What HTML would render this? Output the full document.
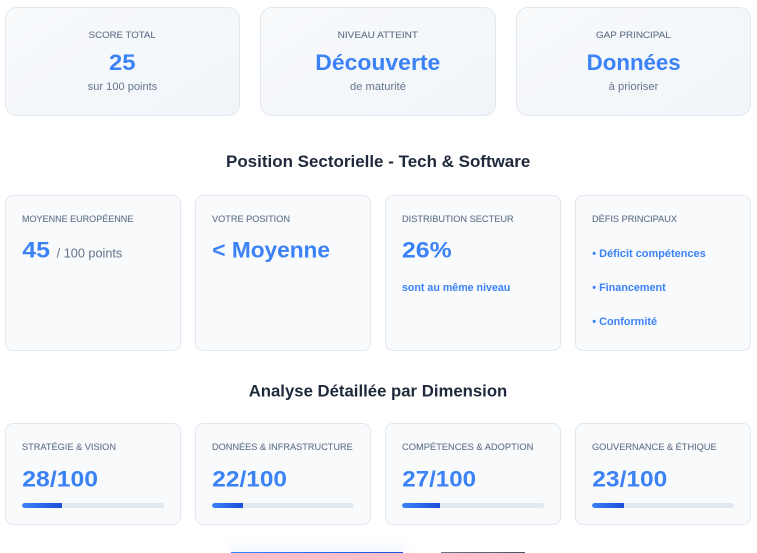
<!DOCTYPE html>
<html lang="fr">
<head>
<meta charset="utf-8">
<title>Résultats</title>
<style>
html,body{margin:0;padding:0;background:#fff;width:757px;height:553px;overflow:hidden}
body{position:relative;font-family:"Liberation Sans",sans-serif}
#w{position:absolute;left:0;top:0;width:757px;height:553px;overflow:hidden}
.c{position:absolute;box-sizing:border-box;border:1px solid #e2e8f0}
.t{width:235px;height:109px;top:7px;border-radius:12px;background:linear-gradient(145deg,#f8fafc,#f1f5f9)}
.m{width:176px;height:156px;top:195px;border-radius:8px;background:#f8fafc}
.b{width:176px;height:102px;top:423px;border-radius:8px;background:#f8fafc}
.x1{left:5px}.x2{left:195px}.x3{left:385px}.x4{left:575px}
.tr{position:absolute;top:503px;width:142px;height:5px;border-radius:3px;background:#e2e8f0;overflow:hidden}
.tr i{display:block;height:5px;background:linear-gradient(90deg,#3b82f6,#1d4ed8);border-radius:3px 0 0 3px}
.btn{position:absolute;top:552px;height:1px}
svg{position:absolute;left:0;top:0}
text{font-family:"Liberation Sans",sans-serif}
.l{font-size:9.4px;fill:#64748b;stroke:#64748b;stroke-width:.12px}
.v{font-size:22px;font-weight:bold;fill:#3b82f6}
.s{font-size:11px;fill:#64748b}
.h{font-size:17px;font-weight:bold;fill:#1e293b}
.d{font-size:11px;font-weight:bold;fill:#3b82f6}
</style>
</head>
<body>
<div id="w">
<div class="c t" style="left:5px"></div>
<div class="c t" style="left:260px;width:236px"></div>
<div class="c t" style="left:516px"></div>

<div class="c m x1"></div><div class="c m x2"></div><div class="c m x3"></div><div class="c m x4"></div>

<div class="c b x1"></div><div class="c b x2"></div><div class="c b x3"></div><div class="c b x4"></div>

<div class="tr" style="left:22px"><i style="width:40px"></i></div>
<div class="tr" style="left:212px"><i style="width:31px"></i></div>
<div class="tr" style="left:402px"><i style="width:38px"></i></div>
<div class="tr" style="left:592px"><i style="width:32px"></i></div>

<div class="btn" style="left:231px;width:172px;background:linear-gradient(90deg,#3b82f6,#1d4ed8);box-shadow:0 0 14px 2px rgba(59,130,246,.2)"></div>
<div class="btn" style="left:441px;width:84px;background:linear-gradient(90deg,#64748b,#475569)"></div>

<svg width="757" height="553" viewBox="0 0 757 553">
<text class="l" x="88.7" y="38" textLength="67" lengthAdjust="spacingAndGlyphs">SCORE TOTAL</text>
<text class="v" x="109" y="70" textLength="26.5" lengthAdjust="spacingAndGlyphs">25</text>
<text class="s" x="87.7" y="90" textLength="69.6" lengthAdjust="spacingAndGlyphs">sur 100 points</text>

<text class="l" x="337.7" y="38" textLength="80.3" lengthAdjust="spacingAndGlyphs">NIVEAU ATTEINT</text>
<text class="v" x="315.3" y="70" textLength="125" lengthAdjust="spacingAndGlyphs">Découverte</text>
<text class="s" x="350" y="90" textLength="56" lengthAdjust="spacingAndGlyphs">de maturité</text>

<text class="l" x="596" y="38" textLength="74.7" lengthAdjust="spacingAndGlyphs">GAP PRINCIPAL</text>
<text class="v" x="586.7" y="70" textLength="94" lengthAdjust="spacingAndGlyphs">Données</text>
<text class="s" x="608.7" y="90" textLength="49.6" lengthAdjust="spacingAndGlyphs">à prioriser</text>

<text class="h" x="226" y="167" textLength="304.3" lengthAdjust="spacingAndGlyphs">Position Sectorielle - Tech &amp; Software</text>

<text class="l" x="22" y="222" textLength="111.3" lengthAdjust="spacingAndGlyphs">MOYENNE EUROPÉENNE</text>
<text class="v" x="22.3" y="257.3" textLength="27.7" lengthAdjust="spacingAndGlyphs">45</text>
<text x="56.7" y="257.3" font-size="12.5" fill="#64748b" textLength="65.6" lengthAdjust="spacingAndGlyphs">/ 100 points</text>

<text class="l" x="212" y="222" textLength="78" lengthAdjust="spacingAndGlyphs">VOTRE POSITION</text>
<text class="v" x="212.3" y="257.3" textLength="117.7" lengthAdjust="spacingAndGlyphs">&lt; Moyenne</text>

<text class="l" x="402" y="222" textLength="111.7" lengthAdjust="spacingAndGlyphs">DISTRIBUTION SECTEUR</text>
<text class="v" x="402" y="257.3" textLength="49.7" lengthAdjust="spacingAndGlyphs">26%</text>
<text class="d" x="402" y="291" textLength="108.3" lengthAdjust="spacingAndGlyphs">sont au même niveau</text>

<text class="l" x="592" y="222" textLength="85" lengthAdjust="spacingAndGlyphs">DÉFIS PRINCIPAUX</text>
<text class="d" x="592.3" y="257" textLength="113.4" lengthAdjust="spacingAndGlyphs">• Déficit compétences</text>
<text class="d" x="592.3" y="291" textLength="73.4" lengthAdjust="spacingAndGlyphs">• Financement</text>
<text class="d" x="592.3" y="325" textLength="64.7" lengthAdjust="spacingAndGlyphs">• Conformité</text>

<text class="h" x="248.7" y="396.3" textLength="258.6" lengthAdjust="spacingAndGlyphs">Analyse Détaillée par Dimension</text>

<text class="l" x="22" y="450" textLength="94" lengthAdjust="spacingAndGlyphs">STRATÉGIE &amp; VISION</text>
<text class="v" x="22.3" y="486.3" textLength="75.7" lengthAdjust="spacingAndGlyphs">28/100</text>

<text class="l" x="212" y="450" textLength="140.7" lengthAdjust="spacingAndGlyphs">DONNÉES &amp; INFRASTRUCTURE</text>
<text class="v" x="212.3" y="486.3" textLength="74.7" lengthAdjust="spacingAndGlyphs">22/100</text>

<text class="l" x="402" y="450" textLength="131.3" lengthAdjust="spacingAndGlyphs">COMPÉTENCES &amp; ADOPTION</text>
<text class="v" x="402.3" y="486.3" textLength="73.7" lengthAdjust="spacingAndGlyphs">27/100</text>

<text class="l" x="592" y="450" textLength="124.7" lengthAdjust="spacingAndGlyphs">GOUVERNANCE &amp; ÉTHIQUE</text>
<text class="v" x="592.3" y="486.3" textLength="75" lengthAdjust="spacingAndGlyphs">23/100</text>
</svg>
</div>
</body>
</html>
